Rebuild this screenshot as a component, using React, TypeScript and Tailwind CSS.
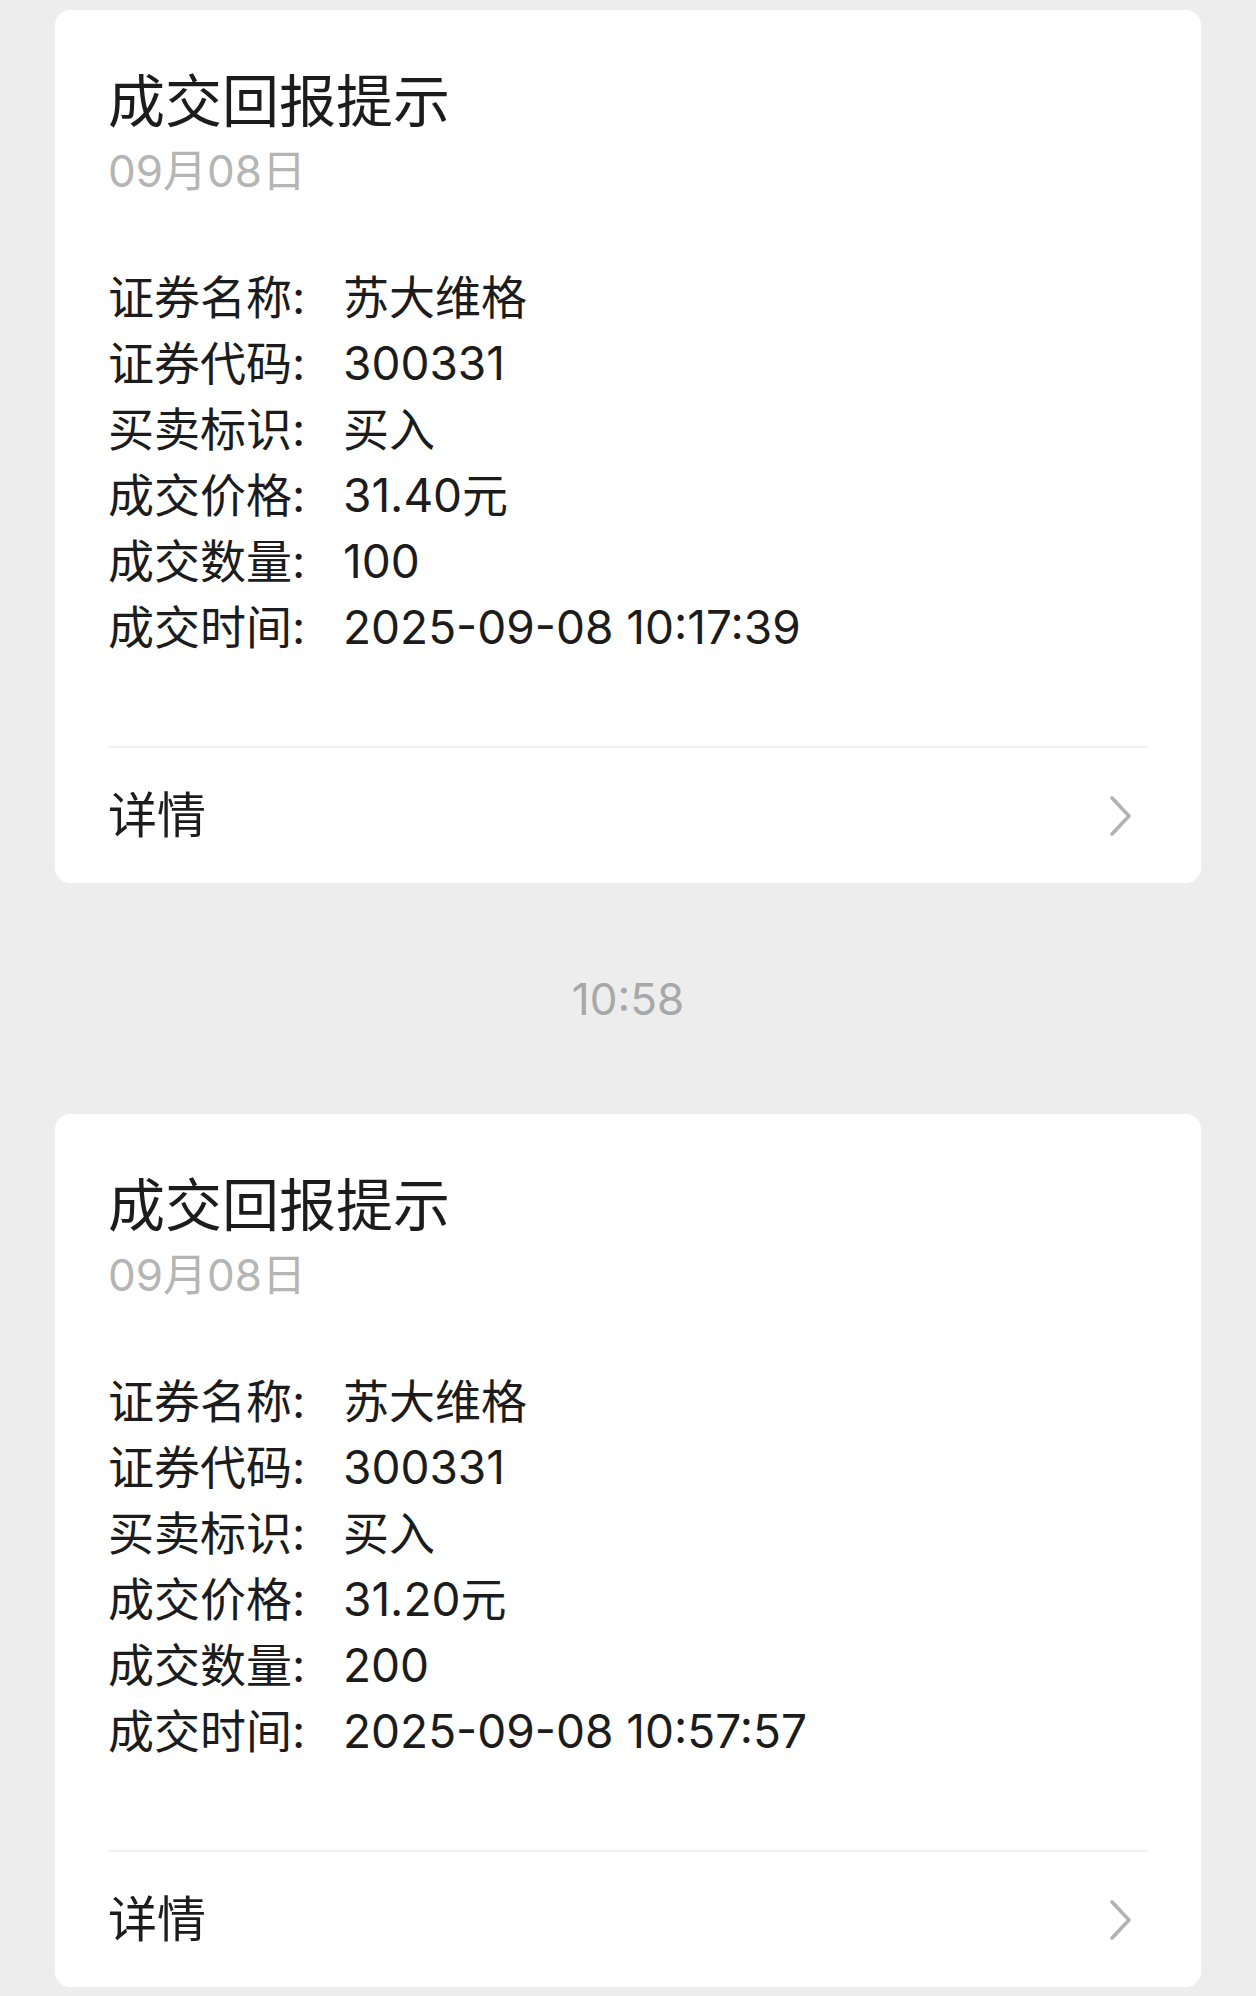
import React from 'react';

interface Trade {
  name: string;
  code: string;
  side: string;
  price: string;
  qty: string;
  time: string;
}

const trades: Trade[] = [
  { name: '苏大维格', code: '300331', side: '买入', price: '31.40元', qty: '100', time: '2025-09-08 10:17:39' },
  { name: '苏大维格', code: '300331', side: '买入', price: '31.20元', qty: '200', time: '2025-09-08 10:57:57' },
];

const font = { fontFamily: 'Inter, "Noto Sans CJK SC", sans-serif' };

const ChevronRight = () => (
  <svg width="26" height="44" viewBox="0 0 26 44" fill="none" className="shrink-0">
    <path d="M4 4 L21 22 L4 40" stroke="#b2b2b2" strokeWidth="3.6" strokeLinecap="round" strokeLinejoin="round" />
  </svg>
);

const TradeCard: React.FC<{ trade: Trade }> = ({ trade }) => {
  const rows: [string, string][] = [
    ['证券名称', trade.name],
    ['证券代码', trade.code],
    ['买卖标识', trade.side],
    ['成交价格', trade.price],
    ['成交数量', trade.qty],
    ['成交时间', trade.time],
  ];

  return (
    <div className="bg-white rounded-[15px] px-[53px] pt-[59px]">
      {/* Header */}
      <div className="text-[57px] leading-[66px] text-[#1c1c1c]">成交回报提示</div>
      <div className="mt-[8px] text-[44px] leading-[56px] text-[#b5b5b5]">09月08日</div>

      {/* Fields */}
      <div className="mt-[65px]">
        {rows.map(([label, value]) => (
          <div key={label} className="flex text-[46px] leading-[66px] text-[#1c1c1c]">
            <span className="w-[235px] shrink-0">{label}:</span>
            <span>{value}</span>
          </div>
        ))}
      </div>

      {/* Footer */}
      <div className="mt-[86px] border-t-2 border-[#f1f1f1] h-[137px] flex items-center justify-between pr-[14px]">
        <span className="text-[49px] text-[#1c1c1c]">详情</span>
        <ChevronRight />
      </div>
    </div>
  );
};

export default function App() {
  return (
    <div className="min-h-[1996px] bg-[#ededed] px-[55px] pt-[10px] pb-[9px]" style={font}>
      <TradeCard trade={trades[0]} />
      <div className="h-[231px] flex items-center justify-center text-[44px] text-[#a8a8a8]">10:58</div>
      <TradeCard trade={trades[1]} />
    </div>
  );
}
